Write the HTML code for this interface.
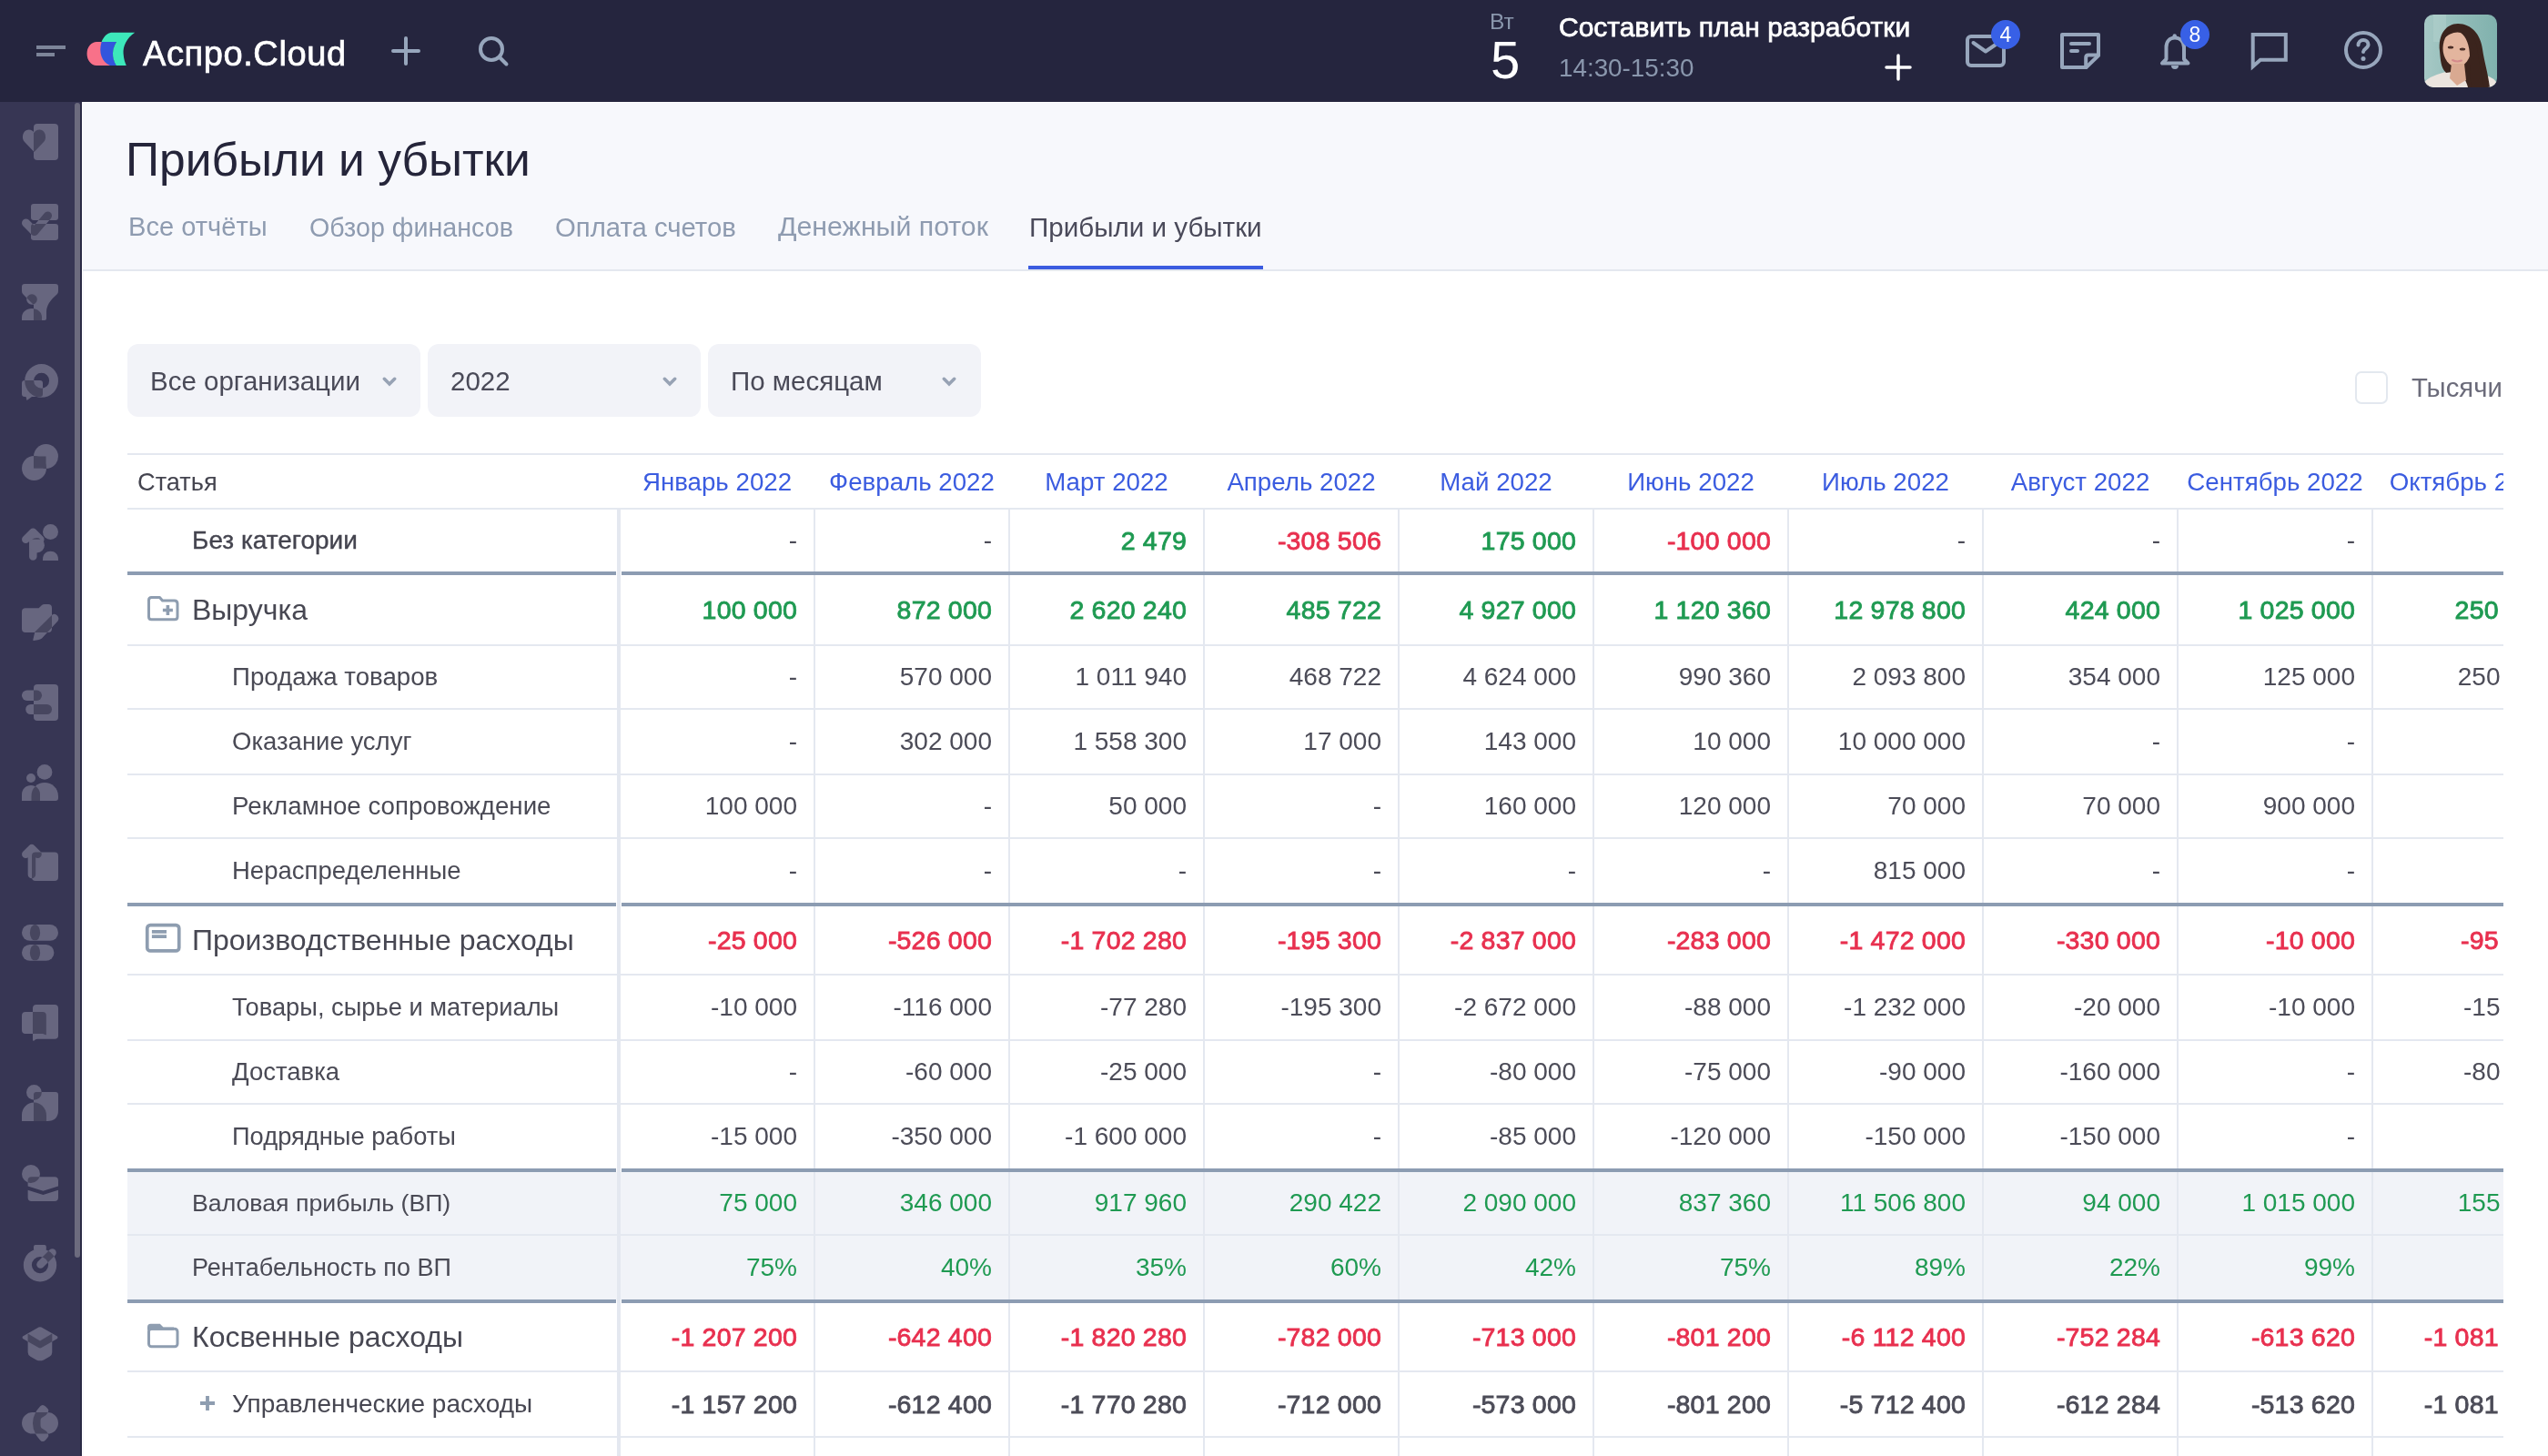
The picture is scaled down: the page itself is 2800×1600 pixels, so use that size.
<!DOCTYPE html>
<html><head><meta charset="utf-8"><title>Прибыли и убытки</title>
<style>
*{box-sizing:border-box;margin:0;padding:0}
html,body{width:2800px;height:1600px;overflow:hidden;background:#fff;font-family:"Liberation Sans",sans-serif;position:relative}
.t{position:absolute;white-space:nowrap}
.r{position:absolute}
svg{position:absolute;overflow:visible}
</style></head><body>
<div id="root" style="position:absolute;left:0;top:0;width:2800px;height:1600px;overflow:hidden;will-change:transform;background:#fff">

<div class="r" style="left:0px;top:0px;width:2800px;height:112px;background:#25253e;"></div>
<div class="r" style="left:40px;top:50px;width:32px;height:4px;background:#7d8599;"></div>
<div class="r" style="left:40px;top:58px;width:20px;height:4px;background:#7d8599;"></div>
<svg style="left:90px;top:30px" width="70" height="50" viewBox="0 0 70 50">
<path d="M16.5 16 L26 16 L34 42 L16 42 A10.7 13 0 0 1 16.5 16 Z" fill="#f87189"/>
<path d="M21.6 16 L38 16 C33 24 33 34 38 42 L31 42 C22 38 18 28 21.6 16 Z" fill="#3355dd"/>
<path d="M32 5.8 L58.2 5.8 C49 12 45 21 45.6 29 C46 35 47.5 39 48.8 42 L37.8 42 C32.5 33 33 24 38 16 L21.6 16 C24 10 28 6.5 32 5.8 Z" fill="#3de8bb"/>
</svg>
<div class="t" style="left:157px;top:39.8px;font-size:38px;line-height:38px;color:#ffffff;font-weight:400;-webkit-text-stroke:0.7px #fff;letter-spacing:0.6px">Аспро.Cloud</div>
<svg style="left:420px;top:30px" width="150" height="50" viewBox="0 0 150 50" fill="none" stroke="#97a6bc" stroke-width="4" stroke-linecap="round">
<path d="M26 12 V40 M12 26 H40"/>
<circle cx="120" cy="24" r="12"/>
<path d="M129 33 L136.5 40.5"/>
</svg>
<div class="t" style="left:1637px;top:11.6px;font-size:24.5px;line-height:24.5px;color:#8a97ad;font-weight:400;">Вт</div>
<div class="t" style="left:1638px;top:37.1px;font-size:58px;line-height:58px;color:#ffffff;font-weight:400;">5</div>
<div class="t" style="left:1713px;top:14.9px;font-size:30px;line-height:30px;color:#ffffff;font-weight:400;-webkit-text-stroke:0.75px #fff">Составить план разработки</div>
<div class="t" style="left:1713px;top:60.7px;font-size:27.8px;line-height:27.8px;color:#8a97ad;font-weight:400;">14:30-15:30</div>
<svg style="left:2068px;top:56px" width="36" height="36" viewBox="0 0 36 36" fill="none" stroke="#ffffff" stroke-width="3.5" stroke-linecap="round">
<path d="M18 5 V31 M5 18 H31"/></svg>
<svg style="left:2150px;top:20px" width="500" height="70" viewBox="0 0 500 70" fill="none" stroke="#97a6bc" stroke-width="4" stroke-linecap="round" stroke-linejoin="round">
<rect x="12" y="20" width="40" height="32" rx="4"/>
<path d="M18.5 27 L32 36.5 L43 29"/>
<path d="M116 18 H156 V41 L142.5 54 H116 Z"/>
<path d="M156 40.6 H145 Q142.2 40.6 142.2 43.4 V54"/>
<path d="M126 28 H146 M126 36 H133"/>
<path d="M240 21.5 C234 21.5 230.5 26 230.5 32 V45 L226 49.5 H254.5 L250 45 V32 C250 26 246 21.5 240 21.5 Z" />
<circle cx="239.7" cy="19.5" r="2.2" fill="#97a6bc" stroke="none"/>
<path d="M236 52 A4 4 0 0 0 244 52 Z" fill="#97a6bc" stroke="none"/>
<path d="M325.7 18 H361.8 V45.8 H334 L325.7 53 Z" stroke-linejoin="miter" stroke-miterlimit="3"/>
<circle cx="447" cy="35" r="19"/>
<path d="M441.5 29.5 C441.5 26.5 444 24 447 24 C450.3 24 452.5 26.3 452.5 29 C452.5 33 447 33.5 447 37" />
<circle cx="447" cy="44.5" r="2.5" fill="#97a6bc" stroke="none"/>
</svg>
<div class="r" style="left:2188px;top:22px;width:32px;height:32px;border-radius:16px;background:#3860e6"></div>
<div class="t" style="left:2188px;width:32px;text-align:center;top:26.8px;font-size:23px;line-height:23px;color:#fff">4</div>
<div class="r" style="left:2396px;top:22px;width:32px;height:32px;border-radius:16px;background:#3860e6"></div>
<div class="t" style="left:2396px;width:32px;text-align:center;top:26.8px;font-size:23px;line-height:23px;color:#fff">8</div>
<svg style="left:2664px;top:16px" width="80" height="80" viewBox="0 0 80 80">
<defs><clipPath id="av"><rect width="80" height="80" rx="10"/></clipPath>
<linearGradient id="avbg" x1="0" y1="0" x2="1" y2="0"><stop offset="0" stop-color="#a6c8c5"/><stop offset="0.45" stop-color="#93bdb9"/><stop offset="1" stop-color="#80b1ad"/></linearGradient></defs>
<g clip-path="url(#av)">
<rect width="80" height="80" fill="url(#avbg)"/>
<rect x="10" y="0" width="14" height="30" fill="#b4d1ce" opacity="0.5"/>
<path d="M0 80 V74 Q6 68 20 64 L34 60 L50 62 L66 66 Q78 70 80 76 V80 Z" fill="#ebe4de"/>
<path d="M17 40 C15 22 24 10 37 10 C52 10 62 22 64 38 C66 52 70 64 72 80 L48 80 C46 72 42 66 38 62 L24 64 C18 58 18 50 17 40 Z" fill="#3b241d"/>
<ellipse cx="36" cy="37" rx="15.5" ry="20.5" fill="#e3b59e"/>
<path d="M30 54 L44 54 L46 72 L36 78 L28 70 Z" fill="#d9a991"/>
<path d="M22 26 C26 16 36 13 44 15 C52 18 56 26 58 36 C60 50 62 64 66 80 L52 80 C50 70 50 58 50 46 C50 34 46 24 40 20 C34 18 26 22 22 26 Z" fill="#3b241d"/>
<ellipse cx="29" cy="36" rx="3.2" ry="1.5" fill="#4a2e26"/>
<ellipse cx="42" cy="38" rx="3.2" ry="1.5" fill="#4a2e26"/>
<path d="M31 50 Q36 52.5 41 50.5" stroke="#d48a8c" stroke-width="2" fill="none" stroke-linecap="round"/>
</g></svg>
<div class="r" style="left:0px;top:112px;width:90px;height:1488px;background:#2a2a45;"></div>
<div class="r" style="left:0px;top:112px;width:88px;height:1488px;background:#373654;"></div>
<div class="r" style="left:82px;top:113px;width:6px;height:1269px;border-radius:3px;background:#6c6b7e"></div>
<svg style="left:24px;top:136px" width="40" height="40" viewBox="0 0 40 40"><defs><clipPath id="ic0"><rect x="13" y="0" width="27" height="40" rx="4" fill="#000"/></clipPath></defs><g color="#67667f"><rect x="13" y="0" width="27" height="40" rx="4" fill="currentColor"/><path d="M13.5 31 L3 20 C-1 16 1 6.5 7.5 6.5 C10.5 6.5 12.5 8 13.5 10 C14.5 8 16.5 6.5 19.5 6.5 C26 6.5 28 16 24 20 Z" fill="currentColor"/></g><g color="#47465f" clip-path="url(#ic0)"><path d="M13.5 31 L3 20 C-1 16 1 6.5 7.5 6.5 C10.5 6.5 12.5 8 13.5 10 C14.5 8 16.5 6.5 19.5 6.5 C26 6.5 28 16 24 20 Z" fill="currentColor"/></g></svg>
<svg style="left:24px;top:224px" width="40" height="40" viewBox="0 0 40 40"><defs><clipPath id="ic1"><rect x="10" y="0" width="30" height="18" rx="3" fill="#000"/><rect x="10" y="22" width="30" height="18" rx="3" fill="#000"/></clipPath></defs><g color="#67667f"><rect x="10" y="0" width="30" height="18" rx="3" fill="currentColor"/><rect x="10" y="22" width="30" height="18" rx="3" fill="currentColor"/><path d="M4.5 21 L13.8 30.5 L28.5 13" stroke="currentColor" stroke-width="9" stroke-linecap="round" stroke-linejoin="round" fill="none"/></g><g color="#47465f" clip-path="url(#ic1)"><path d="M4.5 21 L13.8 30.5 L28.5 13" stroke="currentColor" stroke-width="9" stroke-linecap="round" stroke-linejoin="round" fill="none"/></g></svg>
<svg style="left:24px;top:312px" width="40" height="40" viewBox="0 0 40 40"><defs><clipPath id="ic2"><path d="M3 0 H37 Q40 0 40 3 V8 Q40 10 38.5 11.5 C31 18 27 24 27 31 V38 Q27 40 25 40 H13 V23 L1.5 11.5 Q0 10 0 8 V3 Q0 0 3 0 Z" fill="#000"/></clipPath></defs><g color="#67667f"><path d="M3 0 H37 Q40 0 40 3 V8 Q40 10 38.5 11.5 C31 18 27 24 27 31 V38 Q27 40 25 40 H13 V23 L1.5 11.5 Q0 10 0 8 V3 Q0 0 3 0 Z" fill="currentColor"/><circle cx="11" cy="17" r="5.8" fill="currentColor"/><path d="M0 40 V36.5 C0 31 5 27 11 27 C17 27 22 31 22 36.5 V40 Z" fill="currentColor"/></g><g color="#47465f" clip-path="url(#ic2)"><circle cx="11" cy="17" r="5.8" fill="currentColor"/><path d="M0 40 V36.5 C0 31 5 27 11 27 C17 27 22 31 22 36.5 V40 Z" fill="currentColor"/></g></svg>
<svg style="left:24px;top:400px" width="40" height="40" viewBox="0 0 40 40"><defs><clipPath id="ic3"><path fill-rule="evenodd" d="M21.6 0 A18.4 18.4 0 1 1 21.6 36.8 A18.4 18.4 0 1 1 21.6 0 Z M21.6 9.7 A8.5 8.5 0 1 0 21.6 26.7 A8.5 8.5 0 1 0 21.6 9.7 Z" fill="#000"/></clipPath></defs><g color="#67667f"><path fill-rule="evenodd" d="M21.6 0 A18.4 18.4 0 1 1 21.6 36.8 A18.4 18.4 0 1 1 21.6 0 Z M21.6 9.7 A8.5 8.5 0 1 0 21.6 26.7 A8.5 8.5 0 1 0 21.6 9.7 Z" fill="currentColor"/><path d="M3 18 H20 Q23 18 23 21 V33 Q23 36 20 36 H11 L5.5 40 L4.5 36 H3 Q0 36 0 33 V21 Q0 18 3 18 Z" fill="currentColor"/></g><g color="#47465f" clip-path="url(#ic3)"><path d="M3 18 H20 Q23 18 23 21 V33 Q23 36 20 36 H11 L5.5 40 L4.5 36 H3 Q0 36 0 33 V21 Q0 18 3 18 Z" fill="currentColor"/></g></svg>
<svg style="left:24px;top:488px" width="40" height="40" viewBox="0 0 40 40"><defs><clipPath id="ic4"><circle cx="26.5" cy="13.5" r="13.5" fill="#000"/><rect x="13" y="13.5" width="13.5" height="13" fill="#000"/></clipPath></defs><g color="#67667f"><circle cx="26.5" cy="13.5" r="13.5" fill="currentColor"/><rect x="13" y="13.5" width="13.5" height="13" fill="currentColor"/><circle cx="13.5" cy="26.5" r="13.5" fill="currentColor"/><rect x="13.5" y="13.5" width="13" height="13" fill="currentColor"/></g><g color="#47465f" clip-path="url(#ic4)"><circle cx="13.5" cy="26.5" r="13.5" fill="currentColor"/><rect x="13.5" y="13.5" width="13" height="13" fill="currentColor"/></g></svg>
<svg style="left:24px;top:576px" width="40" height="40" viewBox="0 0 40 40"><defs><clipPath id="ic5"><path d="M4.3 16.8 L12.3 8.8 L20.3 16.8 M12.3 9 V35.5" stroke="#000" stroke-width="8.5" stroke-linecap="round" stroke-linejoin="round" fill="none"/></clipPath></defs><g color="#67667f"><path d="M4.3 16.8 L12.3 8.8 L20.3 16.8 M12.3 9 V35.5" stroke="currentColor" stroke-width="8.5" stroke-linecap="round" stroke-linejoin="round" fill="none"/><circle cx="16.6" cy="23.2" r="8.3" fill="currentColor"/><circle cx="31.5" cy="8.5" r="8.5" fill="currentColor"/><path d="M23 40 V38.5 C23 33 27 29.7 31.5 29.7 C36 29.7 40 33 40 38.5 V40 Z" fill="currentColor"/></g><g color="#47465f" clip-path="url(#ic5)"><circle cx="16.6" cy="23.2" r="8.3" fill="currentColor"/><circle cx="31.5" cy="8.5" r="8.5" fill="currentColor"/><path d="M23 40 V38.5 C23 33 27 29.7 31.5 29.7 C36 29.7 40 33 40 38.5 V40 Z" fill="currentColor"/></g></svg>
<svg style="left:24px;top:664px" width="40" height="40" viewBox="0 0 40 40"><defs><clipPath id="ic6"><path d="M0 8.2 Q0 4.2 4 4.2 H18.6 L22 1 Q23 0 25 0 H29 Q33 0 33 4 V27 Q33 31 29 31 H4 Q0 31 0 27 Z" fill="#000"/></clipPath></defs><g color="#67667f"><path d="M0 8.2 Q0 4.2 4 4.2 H18.6 L22 1 Q23 0 25 0 H29 Q33 0 33 4 V27 Q33 31 29 31 H4 Q0 31 0 27 Z" fill="currentColor"/><path d="M14.3 30.6 L33 12 Q36 9.5 39 12.5 Q41.5 15.5 39.5 18.5 L22 37.5 Q20 39 13 40 Q12 40 12.3 39 Z" fill="currentColor"/></g><g color="#47465f" clip-path="url(#ic6)"><path d="M14.3 30.6 L33 12 Q36 9.5 39 12.5 Q41.5 15.5 39.5 18.5 L22 37.5 Q20 39 13 40 Q12 40 12.3 39 Z" fill="currentColor"/></g></svg>
<svg style="left:24px;top:752px" width="40" height="40" viewBox="0 0 40 40"><defs><clipPath id="ic7"><rect x="13" y="0" width="27" height="40" rx="4" fill="#000"/></clipPath></defs><g color="#67667f"><rect x="13" y="0" width="27" height="40" rx="4" fill="currentColor"/><rect x="0" y="6.6" width="22" height="11.3" rx="5.6" fill="currentColor"/><rect x="4.2" y="22" width="28.8" height="11" rx="5.5" fill="currentColor"/></g><g color="#47465f" clip-path="url(#ic7)"><rect x="0" y="6.6" width="22" height="11.3" rx="5.6" fill="currentColor"/><rect x="4.2" y="22" width="28.8" height="11" rx="5.5" fill="currentColor"/></g></svg>
<svg style="left:24px;top:840px" width="40" height="40" viewBox="0 0 40 40"><defs><clipPath id="ic8"><circle cx="25" cy="8.4" r="8.4" fill="#000"/><path d="M10.5 40 V35 C10.5 26 17 20 25 20 C33 20 40 26 40 35 V37 Q40 40 37 40 Z" fill="#000"/></clipPath></defs><g color="#67667f"><circle cx="25" cy="8.4" r="8.4" fill="currentColor"/><path d="M10.5 40 V35 C10.5 26 17 20 25 20 C33 20 40 26 40 35 V37 Q40 40 37 40 Z" fill="currentColor"/><circle cx="10" cy="15" r="5" fill="currentColor"/><path d="M0 40 V33 C0 27 4.5 23 10 23 C15.5 23 20 27 20 33 V40 Z" fill="currentColor"/></g><g color="#47465f" clip-path="url(#ic8)"><circle cx="10" cy="15" r="5" fill="currentColor"/><path d="M0 40 V33 C0 27 4.5 23 10 23 C15.5 23 20 27 20 33 V40 Z" fill="currentColor"/></g></svg>
<svg style="left:24px;top:928px" width="40" height="40" viewBox="0 0 40 40"><defs><clipPath id="ic9"><rect x="11" y="8.5" width="29" height="31.5" rx="4" fill="#000"/></clipPath></defs><g color="#67667f"><rect x="11" y="8.5" width="29" height="31.5" rx="4" fill="currentColor"/><path d="M4.3 10.8 L10.9 4.3 L17.5 10.8 M10.9 5 V33" stroke="currentColor" stroke-width="8.5" stroke-linecap="round" stroke-linejoin="round" fill="none"/></g><g color="#47465f" clip-path="url(#ic9)"><path d="M4.3 10.8 L10.9 4.3 L17.5 10.8 M10.9 5 V33" stroke="currentColor" stroke-width="8.5" stroke-linecap="round" stroke-linejoin="round" fill="none"/></g></svg>
<svg style="left:24px;top:1016px" width="40" height="40" viewBox="0 0 40 40"><defs><clipPath id="ic10"><rect x="0" y="0" width="40" height="17.8" rx="8.9" fill="#000"/><rect x="0" y="22" width="35.4" height="17.8" rx="8.9" fill="#000"/></clipPath></defs><g color="#67667f"><rect x="0" y="0" width="40" height="17.8" rx="8.9" fill="currentColor"/><rect x="0" y="22" width="35.4" height="17.8" rx="8.9" fill="currentColor"/><ellipse cx="14.5" cy="8.9" rx="5.6" ry="8.9" fill="currentColor"/><ellipse cx="14.5" cy="30.9" rx="5.6" ry="8.9" fill="currentColor"/></g><g color="#47465f" clip-path="url(#ic10)"><ellipse cx="14.5" cy="8.9" rx="5.6" ry="8.9" fill="currentColor"/><ellipse cx="14.5" cy="30.9" rx="5.6" ry="8.9" fill="currentColor"/></g></svg>
<svg style="left:24px;top:1104px" width="40" height="40" viewBox="0 0 40 40"><defs><clipPath id="ic11"><path d="M16 0 H36 Q40 0 40 4 V34 Q40 37.8 36 37.8 H17 Q15 37.8 13.5 39.5 Q12 40.5 12 38.5 V4 Q12 0 16 0 Z" fill="#000"/></clipPath></defs><g color="#67667f"><path d="M16 0 H36 Q40 0 40 4 V34 Q40 37.8 36 37.8 H17 Q15 37.8 13.5 39.5 Q12 40.5 12 38.5 V4 Q12 0 16 0 Z" fill="currentColor"/><path d="M4 8 H22.8 Q26.8 8 26.8 12 V33 Q26 33.5 25 32.8 Q24 32 22.8 32 H4 Q0 32 0 28 V12 Q0 8 4 8 Z" fill="currentColor"/></g><g color="#47465f" clip-path="url(#ic11)"><path d="M4 8 H22.8 Q26.8 8 26.8 12 V33 Q26 33.5 25 32.8 Q24 32 22.8 32 H4 Q0 32 0 28 V12 Q0 8 4 8 Z" fill="currentColor"/></g></svg>
<svg style="left:24px;top:1192px" width="40" height="40" viewBox="0 0 40 40"><defs><clipPath id="ic12"><path d="M13 11 Q13 8 16 8 H37 Q40 8 40 11 V28 Q40 40 28 40 H13 Z" fill="#000"/></clipPath></defs><g color="#67667f"><path d="M13 11 Q13 8 16 8 H37 Q40 8 40 11 V28 Q40 40 28 40 H13 Z" fill="currentColor"/><circle cx="13.4" cy="8.4" r="8.4" fill="currentColor"/><path d="M0 40 V33 C0 25.5 6 19.5 13.4 19.5 C21 19.5 27 26 27 34 V40 Z" fill="currentColor"/></g><g color="#47465f" clip-path="url(#ic12)"><circle cx="13.4" cy="8.4" r="8.4" fill="currentColor"/><path d="M0 40 V33 C0 25.5 6 19.5 13.4 19.5 C21 19.5 27 26 27 34 V40 Z" fill="currentColor"/></g></svg>
<svg style="left:24px;top:1280px" width="40" height="40" viewBox="0 0 40 40"><defs><clipPath id="ic13"><path d="M6.6 17.3 Q6.6 13.3 10.6 13.3 H36 Q40 13.3 40 17.3 V23.4 L23.4 28.7 L6.6 23.4 Z" fill="#000"/><path d="M6.6 27.7 L23.4 33 L40 27.7 V36 Q40 40 36 40 H10.6 Q6.6 40 6.6 36 Z" fill="#000"/></clipPath></defs><g color="#67667f"><path d="M6.6 17.3 Q6.6 13.3 10.6 13.3 H36 Q40 13.3 40 17.3 V23.4 L23.4 28.7 L6.6 23.4 Z" fill="currentColor"/><path d="M6.6 27.7 L23.4 33 L40 27.7 V36 Q40 40 36 40 H10.6 Q6.6 40 6.6 36 Z" fill="currentColor"/><circle cx="10" cy="10" r="10" fill="currentColor"/></g><g color="#47465f" clip-path="url(#ic13)"><circle cx="10" cy="10" r="10" fill="currentColor"/></g></svg>
<svg style="left:24px;top:1368px" width="40" height="40" viewBox="0 0 40 40"><defs><clipPath id="ic14"><path fill-rule="evenodd" d="M20 4 A18.2 18.2 0 1 1 20 40.4 A18.2 18.2 0 1 1 20 4 Z M20 13 A9.1 9.1 0 1 0 20 31.2 A9.1 9.1 0 1 0 20 13 Z" fill="#000"/><rect x="13" y="0" width="13.8" height="6.6" rx="2" fill="#000"/></clipPath></defs><g color="#67667f"><path fill-rule="evenodd" d="M20 4 A18.2 18.2 0 1 1 20 40.4 A18.2 18.2 0 1 1 20 4 Z M20 13 A9.1 9.1 0 1 0 20 31.2 A9.1 9.1 0 1 0 20 13 Z" fill="currentColor"/><rect x="13" y="0" width="13.8" height="6.6" rx="2" fill="currentColor"/><path d="M20.5 21.5 L33.5 8.5" stroke="currentColor" stroke-width="8.5" stroke-linecap="round" fill="none"/></g><g color="#47465f" clip-path="url(#ic14)"><path d="M20.5 21.5 L33.5 8.5" stroke="currentColor" stroke-width="8.5" stroke-linecap="round" fill="none"/></g></svg>
<svg style="left:24px;top:1456px" width="40" height="40" viewBox="0 0 40 40"><defs><clipPath id="ic15"><path d="M18.5 2.6 Q20 1.8 21.5 2.6 L39 12.6 Q40 13.8 39 15 L21.5 25 Q20 25.8 18.5 25 L1 15 Q0 13.8 1 12.6 Z" fill="#000"/></clipPath></defs><g color="#67667f"><path d="M18.5 2.6 Q20 1.8 21.5 2.6 L39 12.6 Q40 13.8 39 15 L21.5 25 Q20 25.8 18.5 25 L1 15 Q0 13.8 1 12.6 Z" fill="currentColor"/><path d="M6.6 9.5 L20 17.6 L33.3 9.5 V30 Q33.3 33 30.5 34.8 L24 38.5 Q20 40.2 16 38.5 L9.5 34.8 Q6.6 33 6.6 30 Z" fill="currentColor"/></g><g color="#47465f" clip-path="url(#ic15)"><path d="M6.6 9.5 L20 17.6 L33.3 9.5 V30 Q33.3 33 30.5 34.8 L24 38.5 Q20 40.2 16 38.5 L9.5 34.8 Q6.6 33 6.6 30 Z" fill="currentColor"/></g></svg>
<svg style="left:24px;top:1544px" width="40" height="40" viewBox="0 0 40 40"><defs><clipPath id="ic16"><rect x="0" y="8" width="40" height="23.6" rx="11.8" fill="#000"/></clipPath></defs><g color="#67667f"><rect x="0" y="8" width="40" height="23.6" rx="11.8" fill="currentColor"/><path d="M22.9 0 Q24.5 0 26 1.5 L28.5 4 Q30 5.6 29 7.5 Q27 11.5 23.5 13 Q20.5 14 20.5 17 V22 Q20.5 25.5 23.5 26.5 Q27 28 29 32 Q30 34 28.5 35.5 L26 38.5 Q24.5 40 22.9 40 Q21.3 40 20 38.5 Q12 30 12 20 Q12 10 20 1.5 Q21.3 0 22.9 0 Z" fill="currentColor"/></g><g color="#47465f" clip-path="url(#ic16)"><path d="M22.9 0 Q24.5 0 26 1.5 L28.5 4 Q30 5.6 29 7.5 Q27 11.5 23.5 13 Q20.5 14 20.5 17 V22 Q20.5 25.5 23.5 26.5 Q27 28 29 32 Q30 34 28.5 35.5 L26 38.5 Q24.5 40 22.9 40 Q21.3 40 20 38.5 Q12 30 12 20 Q12 10 20 1.5 Q21.3 0 22.9 0 Z" fill="currentColor"/></g></svg>
<div class="r" style="left:91px;top:113px;width:2709px;height:183px;background:#f7f8fc;"></div>
<div class="r" style="left:91px;top:296px;width:2709px;height:2px;background:#e4e8ef;"></div>
<div class="r" style="left:91px;top:298px;width:1px;height:1302px;background:#f7f8fc;"></div>
<div class="t" style="left:138px;top:149.9px;font-size:51.5px;line-height:51.5px;color:#25253a;font-weight:400;">Прибыли и убытки</div>
<div class="t" style="left:141px;top:235.4px;font-size:29.1px;line-height:29.1px;color:#8e9bb0;font-weight:400;">Все отчёты</div>
<div class="t" style="left:340px;top:235.7px;font-size:28.7px;line-height:28.7px;color:#8e9bb0;font-weight:400;">Обзор финансов</div>
<div class="t" style="left:610px;top:235.2px;font-size:29.3px;line-height:29.3px;color:#8e9bb0;font-weight:400;">Оплата счетов</div>
<div class="t" style="left:855px;top:234.4px;font-size:30.3px;line-height:30.3px;color:#8e9bb0;font-weight:400;">Денежный поток</div>
<div class="t" style="left:1131px;top:234.9px;font-size:29.6px;line-height:29.6px;color:#4a4a5a;font-weight:400;">Прибыли и убытки</div>
<div class="r" style="left:1130px;top:292px;width:258px;height:4px;background:#3b5ce0;"></div>
<div class="r" style="left:140px;top:378px;width:322px;height:80px;border-radius:12px;background:#f2f3f8"></div>
<div class="t" style="left:165px;top:403.5px;font-size:29.5px;line-height:29.5px;color:#4a4a58;font-weight:400;">Все организации</div>
<svg style="left:420px;top:413px" width="16" height="14" viewBox="0 0 16 14" fill="none" stroke="#97a2b4" stroke-width="3.6" stroke-linecap="round" stroke-linejoin="miter"><path d="M2.3 3.3 L8 9 L13.7 3.3"/></svg>
<div class="r" style="left:470px;top:378px;width:300px;height:80px;border-radius:12px;background:#f2f3f8"></div>
<div class="t" style="left:495px;top:403.5px;font-size:29.5px;line-height:29.5px;color:#4a4a58;font-weight:400;">2022</div>
<svg style="left:728px;top:413px" width="16" height="14" viewBox="0 0 16 14" fill="none" stroke="#97a2b4" stroke-width="3.6" stroke-linecap="round" stroke-linejoin="miter"><path d="M2.3 3.3 L8 9 L13.7 3.3"/></svg>
<div class="r" style="left:778px;top:378px;width:300px;height:80px;border-radius:12px;background:#f2f3f8"></div>
<div class="t" style="left:803px;top:403.5px;font-size:29.5px;line-height:29.5px;color:#4a4a58;font-weight:400;">По месяцам</div>
<svg style="left:1035px;top:413px" width="16" height="14" viewBox="0 0 16 14" fill="none" stroke="#97a2b4" stroke-width="3.6" stroke-linecap="round" stroke-linejoin="miter"><path d="M2.3 3.3 L8 9 L13.7 3.3"/></svg>
<div class="r" style="left:2588px;top:408px;width:36px;height:36px;border:2px solid #e3e8ef;border-radius:7px;background:#fff"></div>
<div class="t" style="left:2650px;top:411.2px;font-size:29.3px;line-height:29.3px;color:#6b6b7a;font-weight:400;">Тысячи</div>
<div class="r" style="left:140px;top:0;width:2611px;height:1600px;overflow:hidden">
<div class="r" style="left:0px;top:498px;width:3000px;height:2px;background:#e4e8f0;"></div>
<div class="t" style="left:11px;top:516.0px;font-size:27.2px;line-height:27.2px;color:#44444f;font-weight:400;">Статья</div>
<div class="t" style="left:348.0px;width:600px;text-align:center;top:515.6px;font-size:27.7px;line-height:27.7px;color:#3b5ce0;font-weight:400;">Январь 2022</div>
<div class="t" style="left:562.0px;width:600px;text-align:center;top:515.6px;font-size:27.7px;line-height:27.7px;color:#3b5ce0;font-weight:400;">Февраль 2022</div>
<div class="t" style="left:776.0px;width:600px;text-align:center;top:515.6px;font-size:27.7px;line-height:27.7px;color:#3b5ce0;font-weight:400;">Март 2022</div>
<div class="t" style="left:990.0px;width:600px;text-align:center;top:515.6px;font-size:27.7px;line-height:27.7px;color:#3b5ce0;font-weight:400;">Апрель 2022</div>
<div class="t" style="left:1204.0px;width:600px;text-align:center;top:515.6px;font-size:27.7px;line-height:27.7px;color:#3b5ce0;font-weight:400;">Май 2022</div>
<div class="t" style="left:1418.0px;width:600px;text-align:center;top:515.6px;font-size:27.7px;line-height:27.7px;color:#3b5ce0;font-weight:400;">Июнь 2022</div>
<div class="t" style="left:1632.0px;width:600px;text-align:center;top:515.6px;font-size:27.7px;line-height:27.7px;color:#3b5ce0;font-weight:400;">Июль 2022</div>
<div class="t" style="left:1846.0px;width:600px;text-align:center;top:515.6px;font-size:27.7px;line-height:27.7px;color:#3b5ce0;font-weight:400;">Август 2022</div>
<div class="t" style="left:2060.0px;width:600px;text-align:center;top:515.6px;font-size:27.7px;line-height:27.7px;color:#3b5ce0;font-weight:400;">Сентябрь 2022</div>
<div class="t" style="left:2274.0px;width:600px;text-align:center;top:515.6px;font-size:27.7px;line-height:27.7px;color:#3b5ce0;font-weight:400;">Октябрь 2022</div>
<div class="r" style="left:0px;top:558px;width:3000px;height:2px;background:#e4e8f0;"></div>
<div class="r" style="left:0px;top:1288px;width:3000px;height:68px;background:#f1f3f8;"></div>
<div class="r" style="left:0px;top:1358px;width:3000px;height:70px;background:#f1f3f8;"></div>
<div class="r" style="left:754px;top:560px;width:2px;height:1100px;background:#e4e8f0;"></div>
<div class="r" style="left:968px;top:560px;width:2px;height:1100px;background:#e4e8f0;"></div>
<div class="r" style="left:1182px;top:560px;width:2px;height:1100px;background:#e4e8f0;"></div>
<div class="r" style="left:1396px;top:560px;width:2px;height:1100px;background:#e4e8f0;"></div>
<div class="r" style="left:1610px;top:560px;width:2px;height:1100px;background:#e4e8f0;"></div>
<div class="r" style="left:1824px;top:560px;width:2px;height:1100px;background:#e4e8f0;"></div>
<div class="r" style="left:2038px;top:560px;width:2px;height:1100px;background:#e4e8f0;"></div>
<div class="r" style="left:2252px;top:560px;width:2px;height:1100px;background:#e4e8f0;"></div>
<div class="r" style="left:2466px;top:560px;width:2px;height:1100px;background:#e4e8f0;"></div>
<div class="r" style="left:0px;top:628px;width:3000px;height:4px;background:#8c9cb2;"></div>
<div class="r" style="left:537px;top:628px;width:6px;height:4px;background:#ffffff;"></div>
<div class="r" style="left:0px;top:708px;width:3000px;height:2px;background:#e4e8f0;"></div>
<div class="r" style="left:0px;top:778px;width:3000px;height:2px;background:#e4e8f0;"></div>
<div class="r" style="left:0px;top:850px;width:3000px;height:2px;background:#e4e8f0;"></div>
<div class="r" style="left:0px;top:920px;width:3000px;height:2px;background:#e4e8f0;"></div>
<div class="r" style="left:0px;top:992px;width:3000px;height:4px;background:#8c9cb2;"></div>
<div class="r" style="left:537px;top:992px;width:6px;height:4px;background:#ffffff;"></div>
<div class="r" style="left:0px;top:1070px;width:3000px;height:2px;background:#e4e8f0;"></div>
<div class="r" style="left:0px;top:1142px;width:3000px;height:2px;background:#e4e8f0;"></div>
<div class="r" style="left:0px;top:1212px;width:3000px;height:2px;background:#e4e8f0;"></div>
<div class="r" style="left:0px;top:1284px;width:3000px;height:4px;background:#8c9cb2;"></div>
<div class="r" style="left:537px;top:1284px;width:6px;height:4px;background:#ffffff;"></div>
<div class="r" style="left:0px;top:1356px;width:3000px;height:2px;background:#e4e8f0;"></div>
<div class="r" style="left:0px;top:1428px;width:3000px;height:4px;background:#8c9cb2;"></div>
<div class="r" style="left:537px;top:1428px;width:6px;height:4px;background:#ffffff;"></div>
<div class="r" style="left:0px;top:1506px;width:3000px;height:2px;background:#e4e8f0;"></div>
<div class="r" style="left:0px;top:1578px;width:3000px;height:2px;background:#e4e8f0;"></div>
<div class="r" style="left:538px;top:560px;width:4px;height:1100px;background:#e4e8f0;"></div>
<div class="t" style="left:71px;top:580.0px;font-size:28px;line-height:28px;color:#44444f;font-weight:400;-webkit-text-stroke:0.35px #44444f">Без категории</div>
<div class="t" style="left:136px;width:600px;text-align:right;top:580.0px;font-size:28px;line-height:28px;color:#4c4c58;font-weight:400;">-</div>
<div class="t" style="left:350px;width:600px;text-align:right;top:580.0px;font-size:28px;line-height:28px;color:#4c4c58;font-weight:400;">-</div>
<div class="t" style="left:564px;width:600px;text-align:right;top:579.8px;font-size:28.5px;line-height:28.5px;color:#1f9a52;font-weight:400;-webkit-text-stroke:0.85px #1f9a52;letter-spacing:0.2px">2 479</div>
<div class="t" style="left:778px;width:600px;text-align:right;top:579.8px;font-size:28.5px;line-height:28.5px;color:#e8304f;font-weight:400;-webkit-text-stroke:0.85px #e8304f;letter-spacing:0.2px">-308 506</div>
<div class="t" style="left:992px;width:600px;text-align:right;top:579.8px;font-size:28.5px;line-height:28.5px;color:#1f9a52;font-weight:400;-webkit-text-stroke:0.85px #1f9a52;letter-spacing:0.2px">175 000</div>
<div class="t" style="left:1206px;width:600px;text-align:right;top:579.8px;font-size:28.5px;line-height:28.5px;color:#e8304f;font-weight:400;-webkit-text-stroke:0.85px #e8304f;letter-spacing:0.2px">-100 000</div>
<div class="t" style="left:1420px;width:600px;text-align:right;top:580.0px;font-size:28px;line-height:28px;color:#4c4c58;font-weight:400;">-</div>
<div class="t" style="left:1634px;width:600px;text-align:right;top:580.0px;font-size:28px;line-height:28px;color:#4c4c58;font-weight:400;">-</div>
<div class="t" style="left:1848px;width:600px;text-align:right;top:580.0px;font-size:28px;line-height:28px;color:#4c4c58;font-weight:400;">-</div>
<div class="t" style="left:71px;top:654.0px;font-size:32px;line-height:32px;color:#474752;font-weight:400;">Выручка</div>
<svg style="left:21px;top:655.0px" width="36" height="30" viewBox="0 0 36 30" fill="none" stroke="#8e9db0" stroke-width="3" stroke-linejoin="round">
<path d="M2.5 4.5 Q2.5 1.5 5.5 1.5 H14.5 L17.5 5 H30.5 Q34 5 34 8.5 V22.8 Q34 25.8 31 25.8 H5.5 Q2.5 25.8 2.5 22.8 Z"/>
<path d="M23.4 10 V21 M17.9 15.5 H28.9" stroke-width="3.6"/></svg>
<div class="t" style="left:136px;width:600px;text-align:right;top:655.8px;font-size:28.5px;line-height:28.5px;color:#1f9a52;font-weight:400;-webkit-text-stroke:0.85px #1f9a52;letter-spacing:0.2px">100 000</div>
<div class="t" style="left:350px;width:600px;text-align:right;top:655.8px;font-size:28.5px;line-height:28.5px;color:#1f9a52;font-weight:400;-webkit-text-stroke:0.85px #1f9a52;letter-spacing:0.2px">872 000</div>
<div class="t" style="left:564px;width:600px;text-align:right;top:655.8px;font-size:28.5px;line-height:28.5px;color:#1f9a52;font-weight:400;-webkit-text-stroke:0.85px #1f9a52;letter-spacing:0.2px">2 620 240</div>
<div class="t" style="left:778px;width:600px;text-align:right;top:655.8px;font-size:28.5px;line-height:28.5px;color:#1f9a52;font-weight:400;-webkit-text-stroke:0.85px #1f9a52;letter-spacing:0.2px">485 722</div>
<div class="t" style="left:992px;width:600px;text-align:right;top:655.8px;font-size:28.5px;line-height:28.5px;color:#1f9a52;font-weight:400;-webkit-text-stroke:0.85px #1f9a52;letter-spacing:0.2px">4 927 000</div>
<div class="t" style="left:1206px;width:600px;text-align:right;top:655.8px;font-size:28.5px;line-height:28.5px;color:#1f9a52;font-weight:400;-webkit-text-stroke:0.85px #1f9a52;letter-spacing:0.2px">1 120 360</div>
<div class="t" style="left:1420px;width:600px;text-align:right;top:655.8px;font-size:28.5px;line-height:28.5px;color:#1f9a52;font-weight:400;-webkit-text-stroke:0.85px #1f9a52;letter-spacing:0.2px">12 978 800</div>
<div class="t" style="left:1634px;width:600px;text-align:right;top:655.8px;font-size:28.5px;line-height:28.5px;color:#1f9a52;font-weight:400;-webkit-text-stroke:0.85px #1f9a52;letter-spacing:0.2px">424 000</div>
<div class="t" style="left:1848px;width:600px;text-align:right;top:655.8px;font-size:28.5px;line-height:28.5px;color:#1f9a52;font-weight:400;-webkit-text-stroke:0.85px #1f9a52;letter-spacing:0.2px">1 025 000</div>
<div class="t" style="left:2062px;width:600px;text-align:right;top:655.8px;font-size:28.5px;line-height:28.5px;color:#1f9a52;font-weight:400;-webkit-text-stroke:0.85px #1f9a52;letter-spacing:0.2px">250 000</div>
<div class="t" style="left:115px;top:730.1px;font-size:27.7px;line-height:27.7px;color:#4a4a55;font-weight:400;">Продажа товаров</div>
<div class="t" style="left:136px;width:600px;text-align:right;top:730.0px;font-size:28px;line-height:28px;color:#4c4c58;font-weight:400;">-</div>
<div class="t" style="left:350px;width:600px;text-align:right;top:730.0px;font-size:28px;line-height:28px;color:#4c4c58;font-weight:400;">570 000</div>
<div class="t" style="left:564px;width:600px;text-align:right;top:730.0px;font-size:28px;line-height:28px;color:#4c4c58;font-weight:400;">1 011 940</div>
<div class="t" style="left:778px;width:600px;text-align:right;top:730.0px;font-size:28px;line-height:28px;color:#4c4c58;font-weight:400;">468 722</div>
<div class="t" style="left:992px;width:600px;text-align:right;top:730.0px;font-size:28px;line-height:28px;color:#4c4c58;font-weight:400;">4 624 000</div>
<div class="t" style="left:1206px;width:600px;text-align:right;top:730.0px;font-size:28px;line-height:28px;color:#4c4c58;font-weight:400;">990 360</div>
<div class="t" style="left:1420px;width:600px;text-align:right;top:730.0px;font-size:28px;line-height:28px;color:#4c4c58;font-weight:400;">2 093 800</div>
<div class="t" style="left:1634px;width:600px;text-align:right;top:730.0px;font-size:28px;line-height:28px;color:#4c4c58;font-weight:400;">354 000</div>
<div class="t" style="left:1848px;width:600px;text-align:right;top:730.0px;font-size:28px;line-height:28px;color:#4c4c58;font-weight:400;">125 000</div>
<div class="t" style="left:2062px;width:600px;text-align:right;top:730.0px;font-size:28px;line-height:28px;color:#4c4c58;font-weight:400;">250 000</div>
<div class="t" style="left:115px;top:801.2px;font-size:27.5px;line-height:27.5px;color:#4a4a55;font-weight:400;">Оказание услуг</div>
<div class="t" style="left:136px;width:600px;text-align:right;top:801.0px;font-size:28px;line-height:28px;color:#4c4c58;font-weight:400;">-</div>
<div class="t" style="left:350px;width:600px;text-align:right;top:801.0px;font-size:28px;line-height:28px;color:#4c4c58;font-weight:400;">302 000</div>
<div class="t" style="left:564px;width:600px;text-align:right;top:801.0px;font-size:28px;line-height:28px;color:#4c4c58;font-weight:400;">1 558 300</div>
<div class="t" style="left:778px;width:600px;text-align:right;top:801.0px;font-size:28px;line-height:28px;color:#4c4c58;font-weight:400;">17 000</div>
<div class="t" style="left:992px;width:600px;text-align:right;top:801.0px;font-size:28px;line-height:28px;color:#4c4c58;font-weight:400;">143 000</div>
<div class="t" style="left:1206px;width:600px;text-align:right;top:801.0px;font-size:28px;line-height:28px;color:#4c4c58;font-weight:400;">10 000</div>
<div class="t" style="left:1420px;width:600px;text-align:right;top:801.0px;font-size:28px;line-height:28px;color:#4c4c58;font-weight:400;">10 000 000</div>
<div class="t" style="left:1634px;width:600px;text-align:right;top:801.0px;font-size:28px;line-height:28px;color:#4c4c58;font-weight:400;">-</div>
<div class="t" style="left:1848px;width:600px;text-align:right;top:801.0px;font-size:28px;line-height:28px;color:#4c4c58;font-weight:400;">-</div>
<div class="t" style="left:115px;top:872.1px;font-size:27.7px;line-height:27.7px;color:#4a4a55;font-weight:400;">Рекламное сопровождение</div>
<div class="t" style="left:136px;width:600px;text-align:right;top:872.0px;font-size:28px;line-height:28px;color:#4c4c58;font-weight:400;">100 000</div>
<div class="t" style="left:350px;width:600px;text-align:right;top:872.0px;font-size:28px;line-height:28px;color:#4c4c58;font-weight:400;">-</div>
<div class="t" style="left:564px;width:600px;text-align:right;top:872.0px;font-size:28px;line-height:28px;color:#4c4c58;font-weight:400;">50 000</div>
<div class="t" style="left:778px;width:600px;text-align:right;top:872.0px;font-size:28px;line-height:28px;color:#4c4c58;font-weight:400;">-</div>
<div class="t" style="left:992px;width:600px;text-align:right;top:872.0px;font-size:28px;line-height:28px;color:#4c4c58;font-weight:400;">160 000</div>
<div class="t" style="left:1206px;width:600px;text-align:right;top:872.0px;font-size:28px;line-height:28px;color:#4c4c58;font-weight:400;">120 000</div>
<div class="t" style="left:1420px;width:600px;text-align:right;top:872.0px;font-size:28px;line-height:28px;color:#4c4c58;font-weight:400;">70 000</div>
<div class="t" style="left:1634px;width:600px;text-align:right;top:872.0px;font-size:28px;line-height:28px;color:#4c4c58;font-weight:400;">70 000</div>
<div class="t" style="left:1848px;width:600px;text-align:right;top:872.0px;font-size:28px;line-height:28px;color:#4c4c58;font-weight:400;">900 000</div>
<div class="t" style="left:115px;top:943.2px;font-size:27.5px;line-height:27.5px;color:#4a4a55;font-weight:400;">Нераспределенные</div>
<div class="t" style="left:136px;width:600px;text-align:right;top:943.0px;font-size:28px;line-height:28px;color:#4c4c58;font-weight:400;">-</div>
<div class="t" style="left:350px;width:600px;text-align:right;top:943.0px;font-size:28px;line-height:28px;color:#4c4c58;font-weight:400;">-</div>
<div class="t" style="left:564px;width:600px;text-align:right;top:943.0px;font-size:28px;line-height:28px;color:#4c4c58;font-weight:400;">-</div>
<div class="t" style="left:778px;width:600px;text-align:right;top:943.0px;font-size:28px;line-height:28px;color:#4c4c58;font-weight:400;">-</div>
<div class="t" style="left:992px;width:600px;text-align:right;top:943.0px;font-size:28px;line-height:28px;color:#4c4c58;font-weight:400;">-</div>
<div class="t" style="left:1206px;width:600px;text-align:right;top:943.0px;font-size:28px;line-height:28px;color:#4c4c58;font-weight:400;">-</div>
<div class="t" style="left:1420px;width:600px;text-align:right;top:943.0px;font-size:28px;line-height:28px;color:#4c4c58;font-weight:400;">815 000</div>
<div class="t" style="left:1634px;width:600px;text-align:right;top:943.0px;font-size:28px;line-height:28px;color:#4c4c58;font-weight:400;">-</div>
<div class="t" style="left:1848px;width:600px;text-align:right;top:943.0px;font-size:28px;line-height:28px;color:#4c4c58;font-weight:400;">-</div>
<div class="t" style="left:71px;top:1017.0px;font-size:32px;line-height:32px;color:#474752;font-weight:400;">Производственные расходы</div>
<svg style="left:19px;top:1014px" width="40" height="34" viewBox="0 0 40 34" fill="none" stroke="#8e9db0" stroke-width="3.7" stroke-linejoin="round">
<rect x="2.75" y="2.65" width="35" height="28.3" rx="3.5"/>
<path d="M7.9 9.9 H24 M7.9 15.05 H24" stroke-width="3.7"/></svg>
<div class="t" style="left:136px;width:600px;text-align:right;top:1018.8px;font-size:28.5px;line-height:28.5px;color:#e8304f;font-weight:400;-webkit-text-stroke:0.85px #e8304f;letter-spacing:0.2px">-25 000</div>
<div class="t" style="left:350px;width:600px;text-align:right;top:1018.8px;font-size:28.5px;line-height:28.5px;color:#e8304f;font-weight:400;-webkit-text-stroke:0.85px #e8304f;letter-spacing:0.2px">-526 000</div>
<div class="t" style="left:564px;width:600px;text-align:right;top:1018.8px;font-size:28.5px;line-height:28.5px;color:#e8304f;font-weight:400;-webkit-text-stroke:0.85px #e8304f;letter-spacing:0.2px">-1 702 280</div>
<div class="t" style="left:778px;width:600px;text-align:right;top:1018.8px;font-size:28.5px;line-height:28.5px;color:#e8304f;font-weight:400;-webkit-text-stroke:0.85px #e8304f;letter-spacing:0.2px">-195 300</div>
<div class="t" style="left:992px;width:600px;text-align:right;top:1018.8px;font-size:28.5px;line-height:28.5px;color:#e8304f;font-weight:400;-webkit-text-stroke:0.85px #e8304f;letter-spacing:0.2px">-2 837 000</div>
<div class="t" style="left:1206px;width:600px;text-align:right;top:1018.8px;font-size:28.5px;line-height:28.5px;color:#e8304f;font-weight:400;-webkit-text-stroke:0.85px #e8304f;letter-spacing:0.2px">-283 000</div>
<div class="t" style="left:1420px;width:600px;text-align:right;top:1018.8px;font-size:28.5px;line-height:28.5px;color:#e8304f;font-weight:400;-webkit-text-stroke:0.85px #e8304f;letter-spacing:0.2px">-1 472 000</div>
<div class="t" style="left:1634px;width:600px;text-align:right;top:1018.8px;font-size:28.5px;line-height:28.5px;color:#e8304f;font-weight:400;-webkit-text-stroke:0.85px #e8304f;letter-spacing:0.2px">-330 000</div>
<div class="t" style="left:1848px;width:600px;text-align:right;top:1018.8px;font-size:28.5px;line-height:28.5px;color:#e8304f;font-weight:400;-webkit-text-stroke:0.85px #e8304f;letter-spacing:0.2px">-10 000</div>
<div class="t" style="left:2062px;width:600px;text-align:right;top:1018.8px;font-size:28.5px;line-height:28.5px;color:#e8304f;font-weight:400;-webkit-text-stroke:0.85px #e8304f;letter-spacing:0.2px">-95 000</div>
<div class="t" style="left:115px;top:1093.4px;font-size:27.3px;line-height:27.3px;color:#4a4a55;font-weight:400;">Товары, сырье и материалы</div>
<div class="t" style="left:136px;width:600px;text-align:right;top:1093.0px;font-size:28px;line-height:28px;color:#4c4c58;font-weight:400;">-10 000</div>
<div class="t" style="left:350px;width:600px;text-align:right;top:1093.0px;font-size:28px;line-height:28px;color:#4c4c58;font-weight:400;">-116 000</div>
<div class="t" style="left:564px;width:600px;text-align:right;top:1093.0px;font-size:28px;line-height:28px;color:#4c4c58;font-weight:400;">-77 280</div>
<div class="t" style="left:778px;width:600px;text-align:right;top:1093.0px;font-size:28px;line-height:28px;color:#4c4c58;font-weight:400;">-195 300</div>
<div class="t" style="left:992px;width:600px;text-align:right;top:1093.0px;font-size:28px;line-height:28px;color:#4c4c58;font-weight:400;">-2 672 000</div>
<div class="t" style="left:1206px;width:600px;text-align:right;top:1093.0px;font-size:28px;line-height:28px;color:#4c4c58;font-weight:400;">-88 000</div>
<div class="t" style="left:1420px;width:600px;text-align:right;top:1093.0px;font-size:28px;line-height:28px;color:#4c4c58;font-weight:400;">-1 232 000</div>
<div class="t" style="left:1634px;width:600px;text-align:right;top:1093.0px;font-size:28px;line-height:28px;color:#4c4c58;font-weight:400;">-20 000</div>
<div class="t" style="left:1848px;width:600px;text-align:right;top:1093.0px;font-size:28px;line-height:28px;color:#4c4c58;font-weight:400;">-10 000</div>
<div class="t" style="left:2062px;width:600px;text-align:right;top:1093.0px;font-size:28px;line-height:28px;color:#4c4c58;font-weight:400;">-15 000</div>
<div class="t" style="left:115px;top:1164.2px;font-size:27.5px;line-height:27.5px;color:#4a4a55;font-weight:400;">Доставка</div>
<div class="t" style="left:136px;width:600px;text-align:right;top:1164.0px;font-size:28px;line-height:28px;color:#4c4c58;font-weight:400;">-</div>
<div class="t" style="left:350px;width:600px;text-align:right;top:1164.0px;font-size:28px;line-height:28px;color:#4c4c58;font-weight:400;">-60 000</div>
<div class="t" style="left:564px;width:600px;text-align:right;top:1164.0px;font-size:28px;line-height:28px;color:#4c4c58;font-weight:400;">-25 000</div>
<div class="t" style="left:778px;width:600px;text-align:right;top:1164.0px;font-size:28px;line-height:28px;color:#4c4c58;font-weight:400;">-</div>
<div class="t" style="left:992px;width:600px;text-align:right;top:1164.0px;font-size:28px;line-height:28px;color:#4c4c58;font-weight:400;">-80 000</div>
<div class="t" style="left:1206px;width:600px;text-align:right;top:1164.0px;font-size:28px;line-height:28px;color:#4c4c58;font-weight:400;">-75 000</div>
<div class="t" style="left:1420px;width:600px;text-align:right;top:1164.0px;font-size:28px;line-height:28px;color:#4c4c58;font-weight:400;">-90 000</div>
<div class="t" style="left:1634px;width:600px;text-align:right;top:1164.0px;font-size:28px;line-height:28px;color:#4c4c58;font-weight:400;">-160 000</div>
<div class="t" style="left:1848px;width:600px;text-align:right;top:1164.0px;font-size:28px;line-height:28px;color:#4c4c58;font-weight:400;">-</div>
<div class="t" style="left:2062px;width:600px;text-align:right;top:1164.0px;font-size:28px;line-height:28px;color:#4c4c58;font-weight:400;">-80 000</div>
<div class="t" style="left:115px;top:1235.4px;font-size:27.3px;line-height:27.3px;color:#4a4a55;font-weight:400;">Подрядные работы</div>
<div class="t" style="left:136px;width:600px;text-align:right;top:1235.0px;font-size:28px;line-height:28px;color:#4c4c58;font-weight:400;">-15 000</div>
<div class="t" style="left:350px;width:600px;text-align:right;top:1235.0px;font-size:28px;line-height:28px;color:#4c4c58;font-weight:400;">-350 000</div>
<div class="t" style="left:564px;width:600px;text-align:right;top:1235.0px;font-size:28px;line-height:28px;color:#4c4c58;font-weight:400;">-1 600 000</div>
<div class="t" style="left:778px;width:600px;text-align:right;top:1235.0px;font-size:28px;line-height:28px;color:#4c4c58;font-weight:400;">-</div>
<div class="t" style="left:992px;width:600px;text-align:right;top:1235.0px;font-size:28px;line-height:28px;color:#4c4c58;font-weight:400;">-85 000</div>
<div class="t" style="left:1206px;width:600px;text-align:right;top:1235.0px;font-size:28px;line-height:28px;color:#4c4c58;font-weight:400;">-120 000</div>
<div class="t" style="left:1420px;width:600px;text-align:right;top:1235.0px;font-size:28px;line-height:28px;color:#4c4c58;font-weight:400;">-150 000</div>
<div class="t" style="left:1634px;width:600px;text-align:right;top:1235.0px;font-size:28px;line-height:28px;color:#4c4c58;font-weight:400;">-150 000</div>
<div class="t" style="left:1848px;width:600px;text-align:right;top:1235.0px;font-size:28px;line-height:28px;color:#4c4c58;font-weight:400;">-</div>
<div class="t" style="left:71px;top:1308.6px;font-size:26.7px;line-height:26.7px;color:#4a4a55;font-weight:400;">Валовая прибыль (ВП)</div>
<div class="t" style="left:136px;width:600px;text-align:right;top:1308.0px;font-size:28px;line-height:28px;color:#1f9a52;font-weight:400;">75 000</div>
<div class="t" style="left:350px;width:600px;text-align:right;top:1308.0px;font-size:28px;line-height:28px;color:#1f9a52;font-weight:400;">346 000</div>
<div class="t" style="left:564px;width:600px;text-align:right;top:1308.0px;font-size:28px;line-height:28px;color:#1f9a52;font-weight:400;">917 960</div>
<div class="t" style="left:778px;width:600px;text-align:right;top:1308.0px;font-size:28px;line-height:28px;color:#1f9a52;font-weight:400;">290 422</div>
<div class="t" style="left:992px;width:600px;text-align:right;top:1308.0px;font-size:28px;line-height:28px;color:#1f9a52;font-weight:400;">2 090 000</div>
<div class="t" style="left:1206px;width:600px;text-align:right;top:1308.0px;font-size:28px;line-height:28px;color:#1f9a52;font-weight:400;">837 360</div>
<div class="t" style="left:1420px;width:600px;text-align:right;top:1308.0px;font-size:28px;line-height:28px;color:#1f9a52;font-weight:400;">11 506 800</div>
<div class="t" style="left:1634px;width:600px;text-align:right;top:1308.0px;font-size:28px;line-height:28px;color:#1f9a52;font-weight:400;">94 000</div>
<div class="t" style="left:1848px;width:600px;text-align:right;top:1308.0px;font-size:28px;line-height:28px;color:#1f9a52;font-weight:400;">1 015 000</div>
<div class="t" style="left:2062px;width:600px;text-align:right;top:1308.0px;font-size:28px;line-height:28px;color:#1f9a52;font-weight:400;">155 000</div>
<div class="t" style="left:71px;top:1379.5px;font-size:27px;line-height:27px;color:#4a4a55;font-weight:400;">Рентабельность по ВП</div>
<div class="t" style="left:136px;width:600px;text-align:right;top:1379.0px;font-size:28px;line-height:28px;color:#1f9a52;font-weight:400;">75%</div>
<div class="t" style="left:350px;width:600px;text-align:right;top:1379.0px;font-size:28px;line-height:28px;color:#1f9a52;font-weight:400;">40%</div>
<div class="t" style="left:564px;width:600px;text-align:right;top:1379.0px;font-size:28px;line-height:28px;color:#1f9a52;font-weight:400;">35%</div>
<div class="t" style="left:778px;width:600px;text-align:right;top:1379.0px;font-size:28px;line-height:28px;color:#1f9a52;font-weight:400;">60%</div>
<div class="t" style="left:992px;width:600px;text-align:right;top:1379.0px;font-size:28px;line-height:28px;color:#1f9a52;font-weight:400;">42%</div>
<div class="t" style="left:1206px;width:600px;text-align:right;top:1379.0px;font-size:28px;line-height:28px;color:#1f9a52;font-weight:400;">75%</div>
<div class="t" style="left:1420px;width:600px;text-align:right;top:1379.0px;font-size:28px;line-height:28px;color:#1f9a52;font-weight:400;">89%</div>
<div class="t" style="left:1634px;width:600px;text-align:right;top:1379.0px;font-size:28px;line-height:28px;color:#1f9a52;font-weight:400;">22%</div>
<div class="t" style="left:1848px;width:600px;text-align:right;top:1379.0px;font-size:28px;line-height:28px;color:#1f9a52;font-weight:400;">99%</div>
<div class="t" style="left:2062px;width:600px;text-align:right;top:1379.0px;font-size:28px;line-height:28px;color:#1f9a52;font-weight:400;">9%</div>
<div class="t" style="left:71px;top:1453.0px;font-size:32px;line-height:32px;color:#474752;font-weight:400;">Косвенные расходы</div>
<svg style="left:21px;top:1454.0px" width="36" height="30" viewBox="0 0 36 30" fill="none" stroke="#8e9db0" stroke-width="3" stroke-linejoin="round">
<rect x="2.5" y="6.3" width="31.5" height="19.5" rx="3"/>
<path d="M1 7.8 V4.5 Q1 0.8 4.5 0.8 H14.8 L18.5 4.5 H30 V7.8 Z" fill="#8e9db0" stroke="none"/></svg>
<div class="t" style="left:136px;width:600px;text-align:right;top:1454.8px;font-size:28.5px;line-height:28.5px;color:#e8304f;font-weight:400;-webkit-text-stroke:0.85px #e8304f;letter-spacing:0.2px">-1 207 200</div>
<div class="t" style="left:350px;width:600px;text-align:right;top:1454.8px;font-size:28.5px;line-height:28.5px;color:#e8304f;font-weight:400;-webkit-text-stroke:0.85px #e8304f;letter-spacing:0.2px">-642 400</div>
<div class="t" style="left:564px;width:600px;text-align:right;top:1454.8px;font-size:28.5px;line-height:28.5px;color:#e8304f;font-weight:400;-webkit-text-stroke:0.85px #e8304f;letter-spacing:0.2px">-1 820 280</div>
<div class="t" style="left:778px;width:600px;text-align:right;top:1454.8px;font-size:28.5px;line-height:28.5px;color:#e8304f;font-weight:400;-webkit-text-stroke:0.85px #e8304f;letter-spacing:0.2px">-782 000</div>
<div class="t" style="left:992px;width:600px;text-align:right;top:1454.8px;font-size:28.5px;line-height:28.5px;color:#e8304f;font-weight:400;-webkit-text-stroke:0.85px #e8304f;letter-spacing:0.2px">-713 000</div>
<div class="t" style="left:1206px;width:600px;text-align:right;top:1454.8px;font-size:28.5px;line-height:28.5px;color:#e8304f;font-weight:400;-webkit-text-stroke:0.85px #e8304f;letter-spacing:0.2px">-801 200</div>
<div class="t" style="left:1420px;width:600px;text-align:right;top:1454.8px;font-size:28.5px;line-height:28.5px;color:#e8304f;font-weight:400;-webkit-text-stroke:0.85px #e8304f;letter-spacing:0.2px">-6 112 400</div>
<div class="t" style="left:1634px;width:600px;text-align:right;top:1454.8px;font-size:28.5px;line-height:28.5px;color:#e8304f;font-weight:400;-webkit-text-stroke:0.85px #e8304f;letter-spacing:0.2px">-752 284</div>
<div class="t" style="left:1848px;width:600px;text-align:right;top:1454.8px;font-size:28.5px;line-height:28.5px;color:#e8304f;font-weight:400;-webkit-text-stroke:0.85px #e8304f;letter-spacing:0.2px">-613 620</div>
<div class="t" style="left:2062px;width:600px;text-align:right;top:1454.8px;font-size:28.5px;line-height:28.5px;color:#e8304f;font-weight:400;-webkit-text-stroke:0.85px #e8304f;letter-spacing:0.2px">-1 081 200</div>
<div class="t" style="left:115px;top:1529.0px;font-size:28px;line-height:28px;color:#474752;font-weight:400;">Управленческие расходы</div>
<svg style="left:80px;top:1534.0px" width="16" height="16" viewBox="0 0 16 16" fill="none" stroke="#8e9db0" stroke-width="3.85">
<path d="M8 0 V16 M0 8 H16"/></svg>
<div class="t" style="left:136px;width:600px;text-align:right;top:1528.8px;font-size:28.5px;line-height:28.5px;color:#4c4c58;font-weight:400;-webkit-text-stroke:0.85px #4c4c58;letter-spacing:0.2px">-1 157 200</div>
<div class="t" style="left:350px;width:600px;text-align:right;top:1528.8px;font-size:28.5px;line-height:28.5px;color:#4c4c58;font-weight:400;-webkit-text-stroke:0.85px #4c4c58;letter-spacing:0.2px">-612 400</div>
<div class="t" style="left:564px;width:600px;text-align:right;top:1528.8px;font-size:28.5px;line-height:28.5px;color:#4c4c58;font-weight:400;-webkit-text-stroke:0.85px #4c4c58;letter-spacing:0.2px">-1 770 280</div>
<div class="t" style="left:778px;width:600px;text-align:right;top:1528.8px;font-size:28.5px;line-height:28.5px;color:#4c4c58;font-weight:400;-webkit-text-stroke:0.85px #4c4c58;letter-spacing:0.2px">-712 000</div>
<div class="t" style="left:992px;width:600px;text-align:right;top:1528.8px;font-size:28.5px;line-height:28.5px;color:#4c4c58;font-weight:400;-webkit-text-stroke:0.85px #4c4c58;letter-spacing:0.2px">-573 000</div>
<div class="t" style="left:1206px;width:600px;text-align:right;top:1528.8px;font-size:28.5px;line-height:28.5px;color:#4c4c58;font-weight:400;-webkit-text-stroke:0.85px #4c4c58;letter-spacing:0.2px">-801 200</div>
<div class="t" style="left:1420px;width:600px;text-align:right;top:1528.8px;font-size:28.5px;line-height:28.5px;color:#4c4c58;font-weight:400;-webkit-text-stroke:0.85px #4c4c58;letter-spacing:0.2px">-5 712 400</div>
<div class="t" style="left:1634px;width:600px;text-align:right;top:1528.8px;font-size:28.5px;line-height:28.5px;color:#4c4c58;font-weight:400;-webkit-text-stroke:0.85px #4c4c58;letter-spacing:0.2px">-612 284</div>
<div class="t" style="left:1848px;width:600px;text-align:right;top:1528.8px;font-size:28.5px;line-height:28.5px;color:#4c4c58;font-weight:400;-webkit-text-stroke:0.85px #4c4c58;letter-spacing:0.2px">-513 620</div>
<div class="t" style="left:2062px;width:600px;text-align:right;top:1528.8px;font-size:28.5px;line-height:28.5px;color:#4c4c58;font-weight:400;-webkit-text-stroke:0.85px #4c4c58;letter-spacing:0.2px">-1 081 200</div>
</div>
</div></body></html>
